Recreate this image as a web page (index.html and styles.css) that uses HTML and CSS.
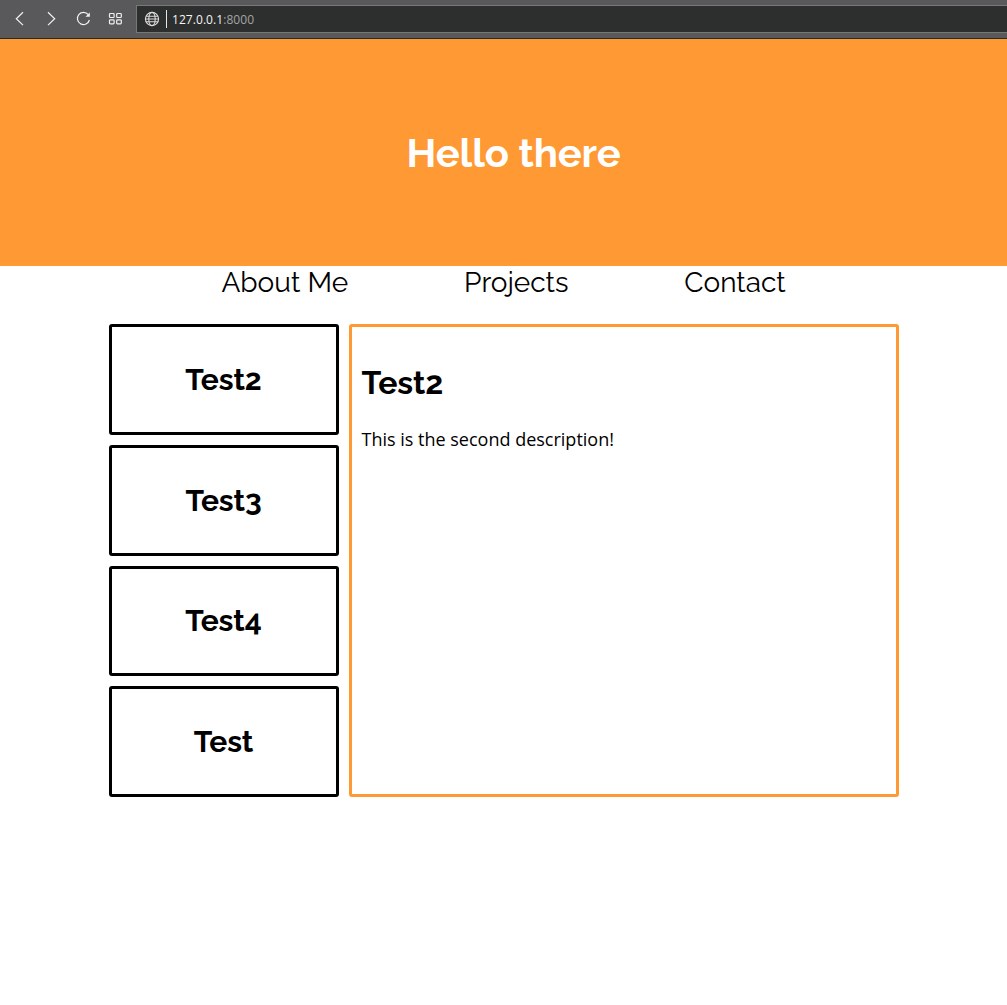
FILE: index.html
```html
<!DOCTYPE html>
<html lang="en">
<head>
<meta charset="utf-8">
<title>Hello there</title>
<link rel="stylesheet" href="styles.css">
</head>
<body>
<div class="toolbar">
  <svg class="controls" width="136" height="38" viewBox="0 0 136 38" fill="none" stroke="#f0f0f0" stroke-width="1.2">
    <path d="M23 12.3 16.3 18.7 23 25.1M48 12.3 54.7 18.7 48 25.1"/>
    <path d="M88.3 14.7A6.1 6.1 0 1 0 89.4 20"/>
    <path d="M89.8 12.5V16.8H85.5Z" fill="#f0f0f0" stroke="none"/>
    <rect x="109.5" y="13.5" width="4.6" height="4" rx=".8"/>
    <rect x="116.7" y="13.5" width="4.6" height="4" rx=".8"/>
    <rect x="109.5" y="19.8" width="4.6" height="4" rx=".8"/>
    <rect x="116.7" y="19.8" width="4.6" height="4" rx=".8"/>
  </svg>
  <div class="address">
    <svg class="globe" width="16" height="16" viewBox="0 0 16 16" fill="none" stroke="#dcdcdc" stroke-width="1.1">
      <circle cx="8" cy="8" r="6.6"/>
      <ellipse cx="8" cy="8" rx="3.2" ry="6.6"/>
      <path d="M2.2 5.2H13.8M1.4 8H14.6M2.2 10.8H13.8"/>
    </svg>
    <span class="divider"></span>
    <span class="url">127.0.0.1<span class="port">:8000</span></span>
  </div>
</div>
<header class="hero"><h1 class="title">Hello there</h1></header>
<nav class="nav">
  <a class="link about">About Me</a>
  <a class="link projects">Projects</a>
  <a class="link contact">Contact</a>
</nav>
<main class="content">
  <div class="card"><h2 class="name">Test2</h2></div>
  <div class="card"><h2 class="name">Test3</h2></div>
  <div class="card"><h2 class="name">Test4</h2></div>
  <div class="card"><h2 class="name">Test</h2></div>
  <section class="detail">
    <h2 class="heading">Test2</h2>
    <p class="description">This is the second description!</p>
  </section>
</main>
</body>
</html>
```
FILE: styles.css
```css
* { box-sizing: border-box; }
body {
  margin: 0;
  background: #fff;
  color: #000;
  font-family: Raleway, Lato, sans-serif;
}
h1, h2, p { margin: 0; }
.toolbar {
  display: flex;
  height: 39px;
  background: #59595b;
  border-bottom: 1px solid #292b2b;
}
.controls { flex: none; }
.address {
  display: flex;
  align-items: center;
  flex: 1;
  height: 28px;
  margin-top: 5px;
  padding-left: 7px;
  background: #2d2f2e;
  border: 1px solid #777977;
  border-right: 0;
}
.divider { width: 1px; height: 18px; margin: 0 5px 0 6px; background: #e5e5e5; }
.url {
  padding-top: 1px;
  font: 12px/18px "Open Sans", "Noto Sans", sans-serif;
  letter-spacing: .06px;
  color: #f4f4f4;
}
.port { color: #a3a5a4; }
.hero {
  display: flex;
  align-items: center;
  justify-content: center;
  height: 227px;
  padding-left: 20px;
  background: #ff9933;
}
.title {
  color: #fff;
  font-size: 40px;
  line-height: 48px;
  letter-spacing: -.1px;
}
.nav {
  display: flex;
  height: 58.4px;
  padding-left: 221.4px;
}
.link { font-size: 28px; line-height: 34px; font-weight: 400; white-space: nowrap; }
.about { width: 242.6px; }
.projects { width: 220.3px; }
.content {
  display: grid;
  grid-template-columns: 230px 550px;
  grid-template-rows: repeat(4, 1fr);
  gap: 10px;
  width: 790px;
  height: 472.6px;
  margin: 0 auto;
}
.card, .detail { border: 3px solid #000; border-radius: 3px; }
.card { display: flex; align-items: center; justify-content: center; padding-top: .5px; }
.name { font-size: 30px; line-height: 36px; letter-spacing: -.08px; }
.detail {
  grid-column: 2;
  grid-row: 1 / 5;
  padding: 36.6px 10px 10px;
  border-color: #ff9933;
}
.heading { font-size: 32px; line-height: 38px; }
.description {
  margin-top: 25px;
  font: 18px/25px "Open Sans", sans-serif;
}
```
